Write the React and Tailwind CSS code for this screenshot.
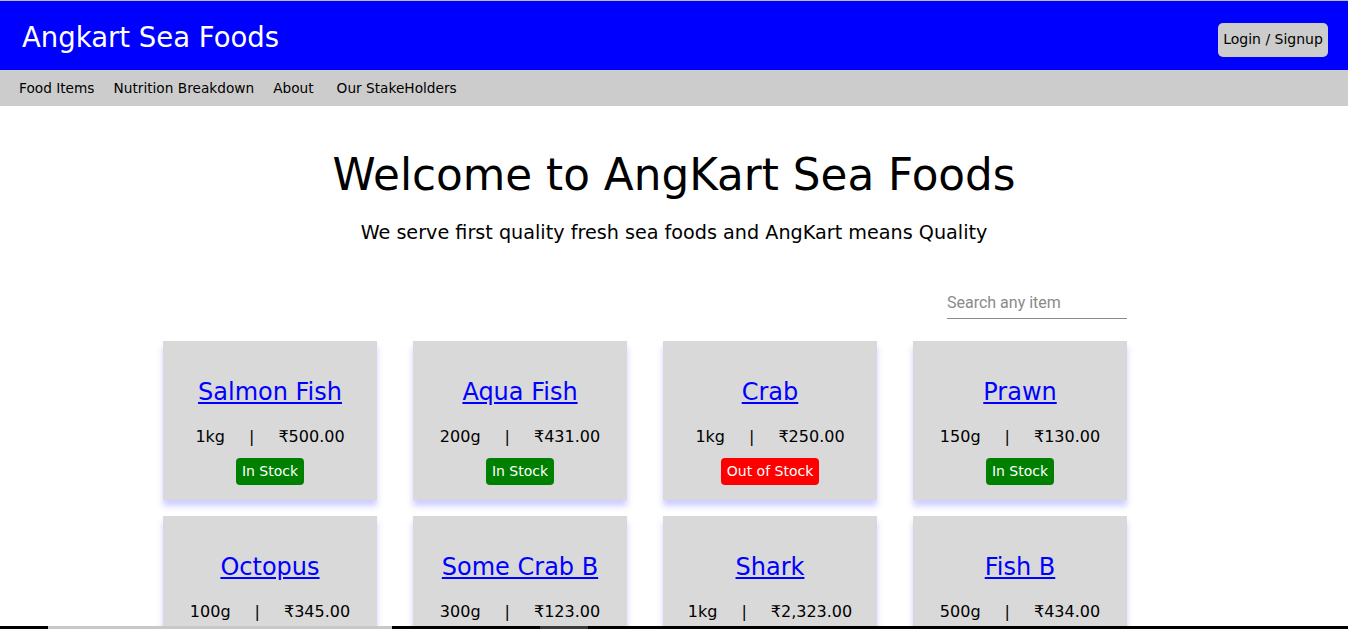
const items = [
  { name: "Salmon Fish", qty: "1kg", price: "₹500.00", inStock: true },
  { name: "Aqua Fish", qty: "200g", price: "₹431.00", inStock: true },
  { name: "Crab", qty: "1kg", price: "₹250.00", inStock: false },
  { name: "Prawn", qty: "150g", price: "₹130.00", inStock: true },
  { name: "Octopus", qty: "100g", price: "₹345.00", inStock: true },
  { name: "Some Crab B", qty: "300g", price: "₹123.00", inStock: true },
  { name: "Shark", qty: "1kg", price: "₹2,323.00", inStock: true },
  { name: "Fish B", qty: "500g", price: "₹434.00", inStock: true },
];

const FoodCard = ({ item }) => {
  return (
    <div className="w-[214px] h-[159px] bg-[#d9d9d9] shadow-[0_6px_6px_rgba(60,60,255,0.25)] flex flex-col items-center pt-[36px]">
      <a href="#" className="text-[24px] leading-[30px] text-[#0000ff] underline">
        {item.name}
      </a>
      <div className="mt-[20px] text-[16px] leading-[20px] text-black flex">
        <span>{item.qty}</span>
        <span className="mx-[24px]">|</span>
        <span>{item.price}</span>
      </div>
      <span
        className={`mt-[11px] h-[27px] px-[6px] rounded-[4px] text-white text-[14px] leading-[27px] ${
          item.inStock ? "bg-[#008000]" : "bg-[#ff0000]"
        }`}
      >
        {item.inStock ? "In Stock" : "Out of Stock"}
      </span>
    </div>
  );
};

const App = () => {
  return (
    <div className="w-full min-h-[629px] bg-white font-['DejaVu_Sans',sans-serif] text-black">
      {/* Header */}
      <div className="border-t border-[#bdbdbd] bg-[#0000ff] h-[70px] flex items-center justify-between pl-[22px] pr-[20px]">
        <h1 className="text-white text-[27.5px] leading-[32px] mt-[2px]">Angkart Sea Foods</h1>
        <button className="bg-[#cccccc] rounded-[5px] w-[110px] h-[34px] text-[14px] text-black mt-[8px]">
          Login / Signup
        </button>
      </div>

      {/* Nav */}
      <nav className="bg-[#cccccc] h-[36px] flex items-center pl-[19px] text-[13.7px] text-black gap-[19px]">
        <a href="#">Food Items</a>
        <a href="#">Nutrition Breakdown</a>
        <a href="#" className="mr-[4px]">About</a>
        <a href="#">Our StakeHolders</a>
      </nav>

      {/* Hero */}
      <div className="text-center pt-[43px]">
        <h2 className="text-[43.7px] leading-[52px]">Welcome to AngKart Sea Foods</h2>
        <p className="mt-[20px] text-[19.2px] leading-[24px]">
          We serve first quality fresh sea foods and AngKart means Quality
        </p>
      </div>

      {/* Items */}
      <div className="ml-[163px] w-[964px]">
        <div className="flex justify-end mt-[42px]">
          <input
            type="text"
            placeholder="Search any item"
            className="w-[180px] h-[32px] border-b border-[#8a8a8a] text-[16px] font-['Roboto',sans-serif] placeholder:text-[#8a8a8a] outline-none bg-transparent"
          />
        </div>
        <div className="grid grid-cols-4 gap-x-[36px] gap-y-[16px] mt-[22px]">
          {items.map((item) => (
            <FoodCard key={item.name} item={item} />
          ))}
        </div>
      </div>

      {/* bottom strip */}
      <div className="fixed left-0 right-0 bottom-0 h-[3px] bg-black flex">
        <div className="ml-[48px] w-[344px] bg-[#c8c8c8]" />
        <div className="ml-[148px] w-[48px] bg-[#3a3a3a]" />
      </div>
    </div>
  );
};

export default App;
